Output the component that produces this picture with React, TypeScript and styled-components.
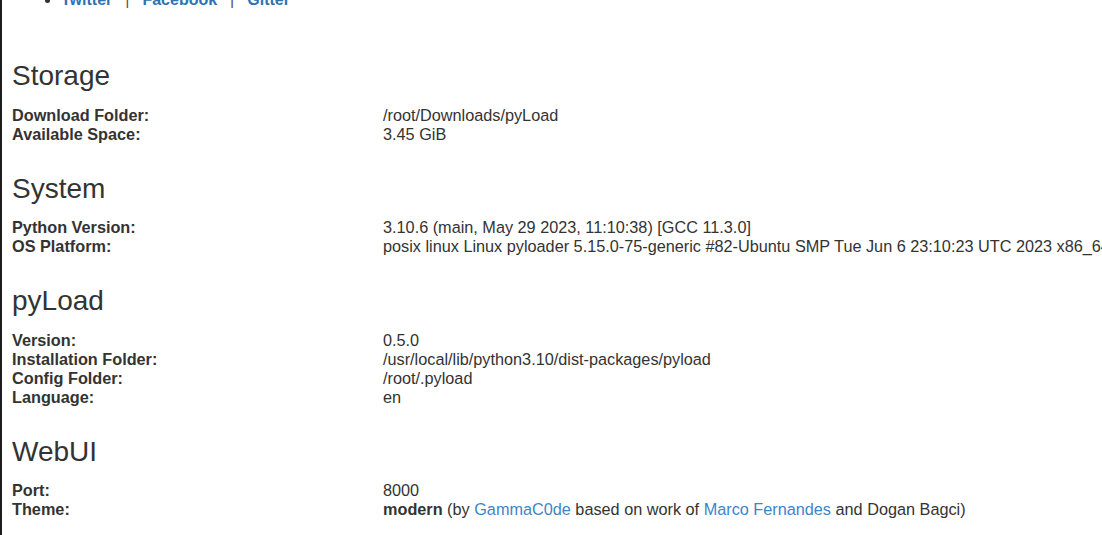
import type { ReactNode } from 'react'
import styled, { createGlobalStyle } from 'styled-components'

const GlobalStyle = createGlobalStyle`
  html, body {
    margin: 0;
    padding: 0;
    background: #fff;
  }
  body {
    font-family: "Liberation Sans", Arial, Helvetica, sans-serif;
    font-size: 16px;
    color: #333;
    overflow: hidden;
  }
`

const Page = styled.div`
  box-sizing: border-box;
  height: 535px;
  overflow: hidden;
  border-left: 2px solid #1e1e1e;
  padding-left: 10px;
`

const LinkList = styled.ul`
  margin: -12px 0 0;
  padding-left: 49px;
  line-height: 24px;
`

const NavLink = styled.a`
  color: #2f72b3;
  font-weight: bold;
  text-decoration: none;
`

const Sep = styled.span`
  color: #555;
  margin: 0 13px;
`

const InfoSection = styled.section`
  margin-top: 28px;
  &:first-of-type {
    margin-top: 47px;
  }
`

const Heading = styled.h3`
  margin: 0 0 13px;
  font-size: 28px;
  font-weight: 400;
  line-height: 1.2;
  color: #333;
`

const InfoRow = styled.div`
  display: grid;
  grid-template-columns: 371px 1fr;
  line-height: 19px;
  font-size: 16.25px;
`

const Label = styled.div`
  font-weight: bold;
  white-space: nowrap;
`

const Value = styled.div`
  white-space: nowrap;
`

const TextLink = styled.a`
  color: #3d85c6;
  text-decoration: none;
`

type Row = { label: string; value: ReactNode }
type Section = { title: string; rows: Row[] }

const sections: Section[] = [
  {
    title: 'Storage',
    rows: [
      { label: 'Download Folder:', value: '/root/Downloads/pyLoad' },
      { label: 'Available Space:', value: '3.45 GiB' },
    ],
  },
  {
    title: 'System',
    rows: [
      { label: 'Python Version:', value: '3.10.6 (main, May 29 2023, 11:10:38) [GCC 11.3.0]' },
      {
        label: 'OS Platform:',
        value:
          'posix linux Linux pyloader 5.15.0-75-generic #82-Ubuntu SMP Tue Jun 6 23:10:23 UTC 2023 x86_64',
      },
    ],
  },
  {
    title: 'pyLoad',
    rows: [
      { label: 'Version:', value: '0.5.0' },
      { label: 'Installation Folder:', value: '/usr/local/lib/python3.10/dist-packages/pyload' },
      { label: 'Config Folder:', value: '/root/.pyload' },
      { label: 'Language:', value: 'en' },
    ],
  },
  {
    title: 'WebUI',
    rows: [
      { label: 'Port:', value: '8000' },
      {
        label: 'Theme:',
        value: (
          <>
            <strong>modern</strong> (by <TextLink href="#">GammaC0de</TextLink> based on work of{' '}
            <TextLink href="#">Marco Fernandes</TextLink> and Dogan Bagci)
          </>
        ),
      },
    ],
  },
]

export default function App() {
  return (
    <>
      <GlobalStyle />
      <Page>
        <LinkList>
          <li>
            <NavLink href="#">Twitter</NavLink>
            <Sep>|</Sep>
            <NavLink href="#">Facebook</NavLink>
            <Sep>|</Sep>
            <NavLink href="#">Gitter</NavLink>
          </li>
        </LinkList>
        {sections.map((s) => (
          <InfoSection key={s.title}>
            <Heading>{s.title}</Heading>
            {s.rows.map((r) => (
              <InfoRow key={r.label}>
                <Label>{r.label}</Label>
                <Value>{r.value}</Value>
              </InfoRow>
            ))}
          </InfoSection>
        ))}
      </Page>
    </>
  )
}
